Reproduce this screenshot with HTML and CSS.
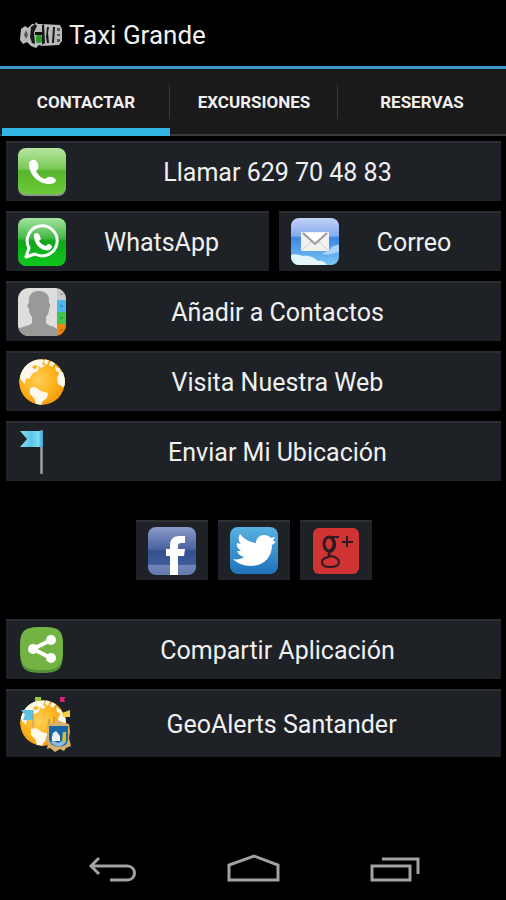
FILE: index.html
```html
<!DOCTYPE html>
<html lang="es">
<head>
    <meta charset="UTF-8">
    <meta name="viewport" content="width=device-width, initial-scale=1.0">
    <title>Taxi Grande</title>
    <link rel="stylesheet" href="styles.css">
</head>
<body>
    <header class="title-bar">
        <svg class="logo" viewBox="0 0 42 26" aria-hidden="true">
            <path d="M1 7l4-3 3 2 4-4h3l1-2 2 2h4l18 1 2 4v12l-3 4-17 1-3-1-3 3-5-2-4-4-4 2-3-4z" fill="#b9bbb9"/>
            <path d="M11 5l4-3 2 2-3 6 1 12-3-1-2-6zM22 3l2-1 1 19-3 2zM27 5h2l-1 6 1 10h-2l-1-6zM33 5h2l-1 16h-2z" fill="#171917"/>
            <path d="M37 6h3v3h-3zM37 12h3v2h-3zM37 17h3v3h-3zM6 8l2 5-2 4-2-4z" fill="#555"/>
            <path d="M15 10h7v3h-7z" fill="#0c120c"/>
            <rect x="16" y="13" width="6" height="8" rx="2" fill="#2c9a2c"/>
        </svg>
        <h1>Taxi Grande</h1>
    </header>

    <nav class="tabs">
        <a class="tab active" href="#contactar">CONTACTAR</a>
        <a class="tab" href="#excursiones">EXCURSIONES</a>
        <a class="tab" href="#reservas">RESERVAS</a>
    </nav>

    <main class="content" id="contactar">
        <button class="btn" type="button">
            <svg class="icon" viewBox="0 0 48 48" aria-hidden="true">
                <defs>
                    <linearGradient id="phone" x1="0" y1="0" x2="0" y2="1">
                        <stop offset="0" stop-color="#b5e6a0"/>
                        <stop offset=".45" stop-color="#7cc958"/>
                        <stop offset=".5" stop-color="#58b52f"/>
                        <stop offset="1" stop-color="#6ccb36"/>
                    </linearGradient>
                </defs>
                <rect y="1" width="48" height="47" rx="8" fill="#8b9a86"/>
                <rect width="48" height="46" rx="8" fill="url(#phone)"/>
                <path d="M11 16c0-3 4-5 6-4 3 2 4 6 3 9l-2 2c2 4 5 7 9 8l3-2c3-1 7 1 8 3 0 3-4 4-7 4-10 0-20-9-20-20z" fill="#fff"/>
            </svg>
            <span>Llamar 629 70 48 83</span>
        </button>

        <div class="pair">
            <button class="btn" type="button">
                <svg class="icon" viewBox="0 0 48 48" aria-hidden="true">
                    <defs>
                        <linearGradient id="whats" x1="0" y1="0" x2="0" y2="1">
                            <stop offset="0" stop-color="#a5e5a0"/>
                            <stop offset=".42" stop-color="#43b846"/>
                            <stop offset=".48" stop-color="#12a51c"/>
                            <stop offset="1" stop-color="#0fc81c"/>
                        </linearGradient>
                    </defs>
                    <rect width="48" height="48" rx="8" fill="url(#whats)"/>
                    <path d="M8 39l3-9a15 15 0 1 1 6 6z" fill="none" stroke="#fff" stroke-width="3" stroke-linejoin="round"/>
                    <path d="M16 18c0-3 3-4 5-2l2 5-2 2c2 3 4 4 7 5l2-2c2 0 4 1 4 3-1 3-4 4-7 3-6-1-11-7-11-14z" fill="#fff"/>
                </svg>
                <span>WhatsApp</span>
            </button>
            <button class="btn" type="button">
                <svg class="icon" viewBox="0 0 48 48" aria-hidden="true">
                    <defs>
                        <linearGradient id="sky" x1="0" y1="0" x2="0" y2="1">
                            <stop offset="0" stop-color="#c3d3f7"/>
                            <stop offset=".38" stop-color="#86aaf0"/>
                            <stop offset=".42" stop-color="#3d86e2"/>
                            <stop offset="1" stop-color="#7cc6f5"/>
                        </linearGradient>
                        <clipPath id="mailclip"><rect width="48" height="47" rx="8"/></clipPath>
                    </defs>
                    <g clip-path="url(#mailclip)">
                        <rect width="48" height="47" fill="url(#sky)"/>
                        <path d="M0 37c5-2 9 0 12 1 7-1 11 2 15 5 4-1 7 1 9 4H0z" fill="#e2f5fa"/>
                        <path d="M31 36c5-4 6-2 9-6 3-3 6-3 8-3v7c-5 1-9 4-17 2z" fill="#a8d2f8"/>
                    </g>
                    <rect x="10" y="14" width="28" height="19" rx="1" fill="#f1f1f1"/>
                    <path d="M11 32l10-9m16 9l-10-9" stroke="#cfcfcf" fill="none"/>
                    <path d="M12 15l12 11 12-11" stroke="#999" stroke-width="2" fill="#fff"/>
                </svg>
                <span>Correo</span>
            </button>
        </div>

        <button class="btn" type="button">
            <svg class="icon" viewBox="0 0 48 48" aria-hidden="true">
                <defs>
                    <clipPath id="cardclip"><rect width="48" height="48" rx="11"/></clipPath>
                </defs>
                <g clip-path="url(#cardclip)">
                    <path d="M0 0h39v48H0z" fill="#dededc"/>
                    <path d="M39 0h9v12h-9z" fill="#c9c9c7"/>
                    <path d="M39 12h9v12h-9z" fill="#4db5f0"/>
                    <path d="M39 24h9v12h-9z" fill="#42c651"/>
                    <path d="M39 36h9v12h-9z" fill="#ee860f"/>
                    <path d="M42 6h3M42 18h3M42 30h3M42 42h3" stroke="#000" stroke-opacity=".35"/>
                    <path d="M0 48v-7c5-3 12-3 14-6v-6c-2-2-3-5-3-8-2-2-2-5 0-6C10 7 14 3 21 3s11 4 10 12c2 1 1 4 0 6 0 3-1 6-3 8v6c2 3 8 3 11 6v7z" fill="#999998"/>
                </g>
            </svg>
            <span>Añadir a Contactos</span>
        </button>

        <button class="btn" type="button">
            <svg class="icon" viewBox="0 0 48 48" aria-hidden="true">
                <defs>
                    <radialGradient id="globe" cx=".42" cy=".45" r=".6">
                        <stop offset="0" stop-color="#ffcf55"/>
                        <stop offset=".6" stop-color="#fdb31c"/>
                        <stop offset="1" stop-color="#ef9708"/>
                    </radialGradient>
                    <clipPath id="globeclip"><circle cx="24" cy="24" r="23"/></clipPath>
                    <g id="earth" clip-path="url(#globeclip)">
                        <circle cx="24" cy="24" r="23" fill="url(#globe)"/>
                        <path d="M2 19C4 9 11 3 19 1l7 1-2 4 3 2-4 2-2-2-1 5-5 2-4 6-3-1-1 6-4-4z" fill="#fdf8ec"/>
                        <path d="M27 1l4 1-2 5-3-2zM33 3l4 2-3 4-3-2zM37 8l5 3v4l-4-2z" fill="#fdf8ec"/>
                        <path d="M16 7l4 1-2 3-4-1z" fill="#fdb31c"/>
                        <path d="M47 15l-5-2-3 7 1 6 5 3 3-2z" fill="#fdf8ec"/>
                        <path d="M12 30l5-1 6 4 7 2-1 5-4 3-2 4-5-1-2-6-4-4z" fill="#fdf8ec"/>
                    </g>
                </defs>
                <use href="#earth"/>
            </svg>
            <span>Visita Nuestra Web</span>
        </button>

        <button class="btn" type="button">
            <svg class="icon" viewBox="0 0 48 48" aria-hidden="true">
                <defs>
                    <linearGradient id="flag">
                        <stop offset="0" stop-color="#8adcf4"/>
                        <stop offset=".5" stop-color="#5cc6e6"/>
                        <stop offset=".8" stop-color="#7edcf5"/>
                        <stop offset="1" stop-color="#37a3c4"/>
                    </linearGradient>
                </defs>
                <path d="M22 2h3v44h-3z" fill="#777b7e"/>
                <path d="M23 3h1v42h-1z" fill="#aaa"/>
                <path d="M2 3h23v16H2l7-8z" fill="url(#flag)"/>
            </svg>
            <span>Enviar Mi Ubicación</span>
        </button>

        <div class="social">
            <button class="btn social-btn" type="button" aria-label="Facebook">
                <svg class="icon" viewBox="0 0 48 48" aria-hidden="true">
                    <defs>
                        <linearGradient id="fb" x1="0" y1="0" x2="0" y2="1">
                            <stop offset="0" stop-color="#8b9bc8"/>
                            <stop offset=".45" stop-color="#4c64a2"/>
                            <stop offset=".5" stop-color="#35508f"/>
                            <stop offset=".78" stop-color="#405b9b"/>
                            <stop offset=".8" stop-color="#7285b7"/>
                            <stop offset="1" stop-color="#6379b0"/>
                        </linearGradient>
                    </defs>
                    <rect width="48" height="48" rx="8" fill="url(#fb)"/>
                    <path d="M22 48V29h-4v-7h4v-4c0-6 4-9 9-9h6v7h-4c-2 0-3 1-3 3v3h7l-1 7h-6v19z" fill="#fff"/>
                </svg>
            </button>
            <button class="btn social-btn" type="button" aria-label="Twitter">
                <svg class="icon" viewBox="0 0 48 48" aria-hidden="true">
                    <defs>
                        <linearGradient id="tw" x1="0" y1="0" x2="0" y2="1">
                            <stop offset="0" stop-color="#59b2df"/>
                            <stop offset="1" stop-color="#1f72ba"/>
                        </linearGradient>
                    </defs>
                    <rect width="48" height="47" rx="8" fill="url(#tw)"/>
                    <path d="M3 32c4 1 8 0 11-2-4-1-6-3-7-6h4c-3-2-5-5-4-8l4 1c-3-3-3-7-1-10 4 5 9 8 16 9 0-5 4-8 8-8 3 0 5 1 7 3l4-1-2 4 3 1-4 3c0 13-9 21-21 21-8 0-14-3-18-7z" fill="#fff"/>
                </svg>
            </button>
            <button class="btn social-btn" type="button" aria-label="Google+">
                <svg class="icon" viewBox="0 0 48 48" aria-hidden="true">
                    <rect x="1" y="1" width="46" height="46" rx="6" fill="#cf3333"/>
                    <g fill="none" stroke="#2c1c20">
                        <ellipse cx="17" cy="17" rx="5" ry="7" stroke-width="3"/>
                        <path d="M17 10h10M21 11c3 4 3 10-1 13-4 2-5 4-1 5 5 1 8 3 8 6 0 4-4 5-9 5s-8-2-8-5c0-4 5-5 10-6" stroke-width="2"/>
                        <path d="M35 9v11M30 15h11" stroke-width="2"/>
                    </g>
                </svg>
            </button>
        </div>

        <button class="btn" type="button">
            <svg class="icon" viewBox="0 0 48 48" aria-hidden="true">
                <path d="M2 24C2 5 5 1 24 1s21 4 21 23-3 23-21 23S2 43 2 24z" fill="#54913a"/>
                <path d="M2 22C2 5 5 1 24 1s21 4 21 21-3 22-21 22S2 40 2 22z" fill="#73b344"/>
                <path d="M33 14L15 23l18 9" fill="none" stroke="#fff" stroke-width="4"/>
                <circle cx="33" cy="14" r="5" fill="#fff"/>
                <circle cx="15" cy="23" r="5" fill="#fff"/>
                <circle cx="33" cy="32" r="5" fill="#fff"/>
            </svg>
            <span>Compartir Aplicación</span>
        </button>

        <button class="btn btn-tall" type="button">
            <svg class="icon icon-wide" viewBox="0 0 56 56" aria-hidden="true">
                <use href="#earth" x="1" y="3"/>
                <path d="M17 1h6v4h-6z" fill="#9ccb35"/>
                <path d="M42 1h6l-2 2 1 3h-5z" fill="#d5247c"/>
                <path d="M3 14h12v10H5l2-5z" fill="#5fc3df"/>
                <path d="M15 14v17" stroke="#999"/>
                <path d="M44 17l8-3v7h-7z" fill="#f2cf3c"/>
                <path d="M29 28l7-2 4-2 4 2 7 2 1 8-1 6 2 8-5 2-2 3-4-2-5 3-5-4-3 1 1-6-3-3 2-5z" fill="#d7b06c"/>
                <path d="M31 30h19v12c0 7-4 8-9 9-6-1-10-3-10-9z" fill="#1767a5"/>
                <path d="M35 37l3-2 4 5v5h-8v-4z" fill="#e9f0f3"/>
                <path d="M45 36h3v10h-4z" fill="#e3b82d"/>
                <path d="M32 46l4-1 4 2 4-2 4 1-3 3-4 2-5-2z" fill="#8dbbdc"/>
                <path d="M30 23h2v5h-2zM35 21h2v6h-2z" fill="#c9a23a"/>
            </svg>
            <span>GeoAlerts Santander</span>
        </button>
    </main>

    <footer class="nav-bar">
        <button class="nav-btn" type="button" aria-label="Atrás">
            <svg viewBox="0 0 54 32" aria-hidden="true">
                <path d="M15 4L7 12l8 8M7 12h36c10 0 10 14 0 14H26" stroke-width="3"/>
            </svg>
        </button>
        <button class="nav-btn" type="button" aria-label="Inicio">
            <svg viewBox="0 0 54 32" aria-hidden="true">
                <path d="M3 26V11l25-9 24 9v15z" stroke-width="3"/>
            </svg>
        </button>
        <button class="nav-btn" type="button" aria-label="Recientes">
            <svg viewBox="0 0 54 32" aria-hidden="true">
                <path d="M4 12h38v14H4zM14 5h36v15" stroke-width="3"/>
            </svg>
        </button>
    </footer>
</body>
</html>
```

FILE: styles.css
```css
* {
    box-sizing: border-box;
}
body {
    font-family: Roboto, "Liberation Sans", sans-serif;
    display: flex;
    flex-direction: column;
    min-height: 100vh;
    margin: 0;
    background-color: #000;
    color: #f0f0f0;
}
.title-bar {
    display: flex;
    align-items: center;
    gap: 7px;
    padding: 18px 20px 14px;
    border-bottom: 3px solid #3a9bc8;
}
.logo {
    width: 42px;
    height: 26px;
}
h1 {
    margin: 0;
    font-size: 26px;
    font-weight: 400;
    line-height: 34px;
}
.tabs {
    display: grid;
    grid-template-columns: repeat(3, 1fr);
    padding: 0 0 0 2px;
    background-color: #1a1a1a;
    border-bottom: 2px solid #3c3c3c;
}
.tab {
    display: flex;
    align-items: center;
    justify-content: center;
    height: 65px;
    color: #f0f0f0;
    font-size: 17px;
    font-weight: 700;
    text-decoration: none;
    background: linear-gradient(#3a3a3a, #3a3a3a) right 16px / 1px 34px no-repeat;
}
.tab:last-child {
    background: none;
}
.tab.active {
    box-shadow: inset 0 -6px #33b5e5, 0 2px #33b5e5;
}
.content {
    display: flex;
    flex-direction: column;
    gap: 10px;
    padding: 5px 5px 0 6px;
}
.btn {
    display: flex;
    align-items: center;
    width: 100%;
    height: 60px;
    padding: 0 12px;
    border: none;
    border-top: 2px solid #2b2f33;
    background-color: #1e2227;
    color: #f0f0f0;
    font-family: inherit;
    font-size: 25px;
    cursor: pointer;
}
.btn span {
    flex: 1;
    text-align: center;
    white-space: nowrap;
}
.btn:hover {
    background-color: #2a3037;
}
.btn-tall {
    height: 68px;
}
.icon {
    flex: none;
    width: 48px;
    height: 48px;
}
.icon-wide {
    width: 56px;
    height: 56px;
}
.pair {
    display: grid;
    grid-template-columns: 263fr 222fr;
    gap: 10px;
}
.social {
    display: flex;
    justify-content: center;
    gap: 10px;
    padding: 29px 0;
}
.social-btn {
    width: 72px;
}
.nav-bar {
    display: flex;
    justify-content: center;
    gap: 88px;
    margin-top: auto;
    padding: 0 0 14px;
}
.nav-btn {
    display: flex;
    padding: 0;
    border: none;
    background: none;
    cursor: pointer;
}
.nav-btn svg {
    width: 54px;
    height: 32px;
    fill: none;
    stroke: #a3a1a1;
}
```
